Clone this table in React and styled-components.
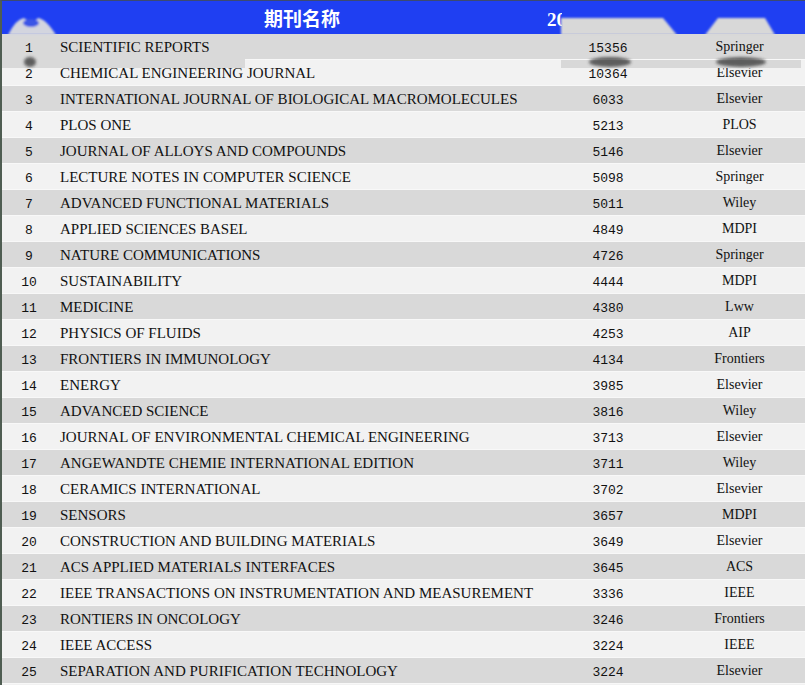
import React from "react";
import styled, { createGlobalStyle } from "styled-components";

const Global = createGlobalStyle`
  html, body { margin: 0; padding: 0; background: #ffffff; }
  body { font-family: "Liberation Serif", "Times New Roman", serif; }
`;

const COLS = "54px 502px 100px 1fr";
const BLUE = "#1f3ff2";

const Table = styled.div`
  position: relative;
  width: 805px;
  height: 685px;
  overflow: hidden;
  box-sizing: border-box;
  border-top: 1px solid #3c4a70;
  border-left: 2px solid #4f5d52;
  background: #f2f2f2;
`;

const Header = styled.div`
  display: grid;
  grid-template-columns: ${COLS};
  height: 33px;
  align-items: center;
  background: ${BLUE};
  color: #ffffff;
  font-family: "Liberation Serif", "Noto Sans CJK SC", serif;
  font-weight: bold;
  font-size: 19px;
`;

const HeadCell = styled.div`
  display: flex;
  justify-content: center;
  white-space: nowrap;
  padding-right: ${(p) => p.$pr || 0}px;
  padding-left: ${(p) => p.$pl || 0}px;
`;

const Row = styled.div`
  display: grid;
  grid-template-columns: ${COLS};
  height: 26px;
  box-sizing: border-box;
  align-items: center;
  background: ${(p) => (p.$odd ? "#d9d9d9" : "#f2f2f2")};
  border-bottom: 1px solid #f8f8f8;
  color: #111111;
`;

const Rank = styled.div`
  font-family: "Liberation Mono", monospace;
  font-size: 13px;
  text-align: center;
  padding-top: 3px;
`;

const Name = styled.div`
  font-family: "Liberation Serif", serif;
  font-size: 15px;
  padding-left: 4px;
  padding-top: 1px;
  white-space: nowrap;
`;

const Count = styled.div`
  font-family: "Liberation Mono", monospace;
  font-size: 13px;
  text-align: center;
  padding-top: 3px;
`;

const Publisher = styled.div`
  font-family: "Liberation Serif", serif;
  font-size: 14px;
  text-align: center;
  padding-left: 16px;
  padding-top: 1px;
`;

/* the worn patch that lies over the top of the table in the picture */
const Wear = styled.svg`
  position: absolute;
  top: 0;
  left: 0;
  pointer-events: none;
`;

function WearOverlay() {
  return (
    <Wear width="805" height="72" viewBox="0 0 805 72">
      <defs>
        <filter id="soft" x="-20%" y="-50%" width="140%" height="200%">
          <feGaussianBlur stdDeviation="1" />
        </filter>
        <filter id="smear" x="-50%" y="-100%" width="200%" height="300%">
          <feGaussianBlur stdDeviation="1.8" />
        </filter>
      </defs>
      <rect x="560" y="0" width="245" height="33" fill={BLUE} />
      <g filter="url(#soft)">
        <polygon points="559,17 661,17 675,34 559,34" fill="#d8d8d8" />
        <polygon points="703,34 716,17 763,17 773,34" fill="#d8d8d8" />
        <path d="M6,34 Q14,18 22,17 Q30,24 36,17 Q44,18 54,34 Z" fill="#d3d5df" />
        <ellipse cx="29" cy="22" rx="8" ry="4" fill="#3a55e6" />
      </g>
      <rect x="0" y="58" width="243" height="9" fill="#d9d9d9" />
      <rect x="243" y="59" width="316" height="8" fill="#f2f2f2" />
      <rect x="559" y="59" width="240" height="8" fill="#d8d8d8" />
      <g filter="url(#smear)" fill="#2a2a2a" opacity="0.7">
        <ellipse cx="28" cy="61" rx="6" ry="5" />
        <ellipse cx="608" cy="61" rx="21" ry="5" />
        <ellipse cx="739" cy="61" rx="25" ry="5" />
      </g>
    </Wear>
  );
}

const data = [
  ["SCIENTIFIC REPORTS", 15356, "Springer"],
  ["CHEMICAL ENGINEERING JOURNAL", 10364, "Elsevier"],
  ["INTERNATIONAL JOURNAL OF BIOLOGICAL MACROMOLECULES", 6033, "Elsevier"],
  ["PLOS ONE", 5213, "PLOS"],
  ["JOURNAL OF ALLOYS AND COMPOUNDS", 5146, "Elsevier"],
  ["LECTURE NOTES IN COMPUTER SCIENCE", 5098, "Springer"],
  ["ADVANCED FUNCTIONAL MATERIALS", 5011, "Wiley"],
  ["APPLIED SCIENCES BASEL", 4849, "MDPI"],
  ["NATURE COMMUNICATIONS", 4726, "Springer"],
  ["SUSTAINABILITY", 4444, "MDPI"],
  ["MEDICINE", 4380, "Lww"],
  ["PHYSICS OF FLUIDS", 4253, "AIP"],
  ["FRONTIERS IN IMMUNOLOGY", 4134, "Frontiers"],
  ["ENERGY", 3985, "Elsevier"],
  ["ADVANCED SCIENCE", 3816, "Wiley"],
  ["JOURNAL OF ENVIRONMENTAL CHEMICAL ENGINEERING", 3713, "Elsevier"],
  ["ANGEWANDTE CHEMIE INTERNATIONAL EDITION", 3711, "Wiley"],
  ["CERAMICS INTERNATIONAL", 3702, "Elsevier"],
  ["SENSORS", 3657, "MDPI"],
  ["CONSTRUCTION AND BUILDING MATERIALS", 3649, "Elsevier"],
  ["ACS APPLIED MATERIALS INTERFACES", 3645, "ACS"],
  ["IEEE TRANSACTIONS ON INSTRUMENTATION AND MEASUREMENT", 3336, "IEEE"],
  ["RONTIERS IN ONCOLOGY", 3246, "Frontiers"],
  ["IEEE ACCESS", 3224, "IEEE"],
  ["SEPARATION AND PURIFICATION TECHNOLOGY", 3224, "Elsevier"],
];

export default function App() {
  return (
    <>
      <Global />
      <Table>
        <Header>
          <HeadCell />
          <HeadCell $pr={10}>期刊名称</HeadCell>
          <HeadCell $pr={8}>2023年发文量</HeadCell>
          <HeadCell $pl={16}>出版商</HeadCell>
        </Header>
        {data.map(([name, count, pub], i) => (
          <Row key={i} $odd={i % 2 === 0}>
            <Rank>{i + 1}</Rank>
            <Name>{name}</Name>
            <Count>{count}</Count>
            <Publisher>{pub}</Publisher>
          </Row>
        ))}
        <WearOverlay />
      </Table>
    </>
  );
}
